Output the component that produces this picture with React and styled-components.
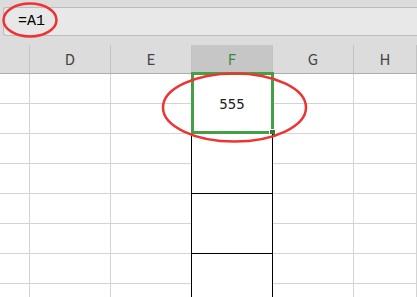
import React from "react";
import styled, { createGlobalStyle } from "styled-components";

const Global = createGlobalStyle`
  html, body { margin: 0; padding: 0; background: #ffffff; overflow: hidden; }
  body { font-family: "Noto Sans CJK SC", "Noto Sans", sans-serif; }
`;

const Page = styled.div`
  position: relative;
  width: 417px;
  height: 297px;
  overflow: hidden;
  background: #ffffff;
`;

const TopArea = styled.div`
  background: #dcdcdc;
  padding: 7px 0 9px 3px;
`;

const FormulaBox = styled.div`
  height: 27px;
  border: 1px solid #bcbcbc;
  border-right: none;
  border-radius: 3px 0 0 3px;
  background: #e8e8e8;
  display: flex;
  align-items: center;
  padding-left: 14px;
  font-family: "Liberation Mono", "DejaVu Sans Mono", monospace;
  font-size: 15px;
  color: #000;
`;

const Grid = styled.div`
  display: grid;
  grid-template-columns: 30px 81px 81px 81px 81px 1fr;
  grid-template-rows: 29px repeat(8, 30px);
`;

const HeadCell = styled.div`
  background: ${(p) => (p.$active ? "#c6c6c6" : "#dcdcdc")};
  border-right: 1px solid #c3c3c3;
  border-bottom: 1px solid #ababab;
  display: flex;
  align-items: center;
  justify-content: center;
  font-size: 15px;
  color: ${(p) => (p.$active ? "#3b8a3b" : "#454545")};
  padding-bottom: 2px;
`;

const Cell = styled.div`
  border-right: 1px solid #d4d4d4;
  border-bottom: 1px solid #d4d4d4;
  background: #fff;
`;

const MergedCell = styled.div`
  grid-column: 4;
  grid-row: span 2;
  position: relative;
  z-index: 1;
  margin-left: -1px;
  border-left: 1px solid #000;
  border-right: 1px solid #000;
  border-bottom: 1px solid #000;
  background: #fff;
  display: flex;
  align-items: center;
  justify-content: center;
  font-family: "DejaVu Sans Mono", "Liberation Mono", monospace;
  font-size: 14px;
  color: #222;
`;

const Selection = styled.div`
  position: absolute;
  top: -2px;
  left: -1px;
  right: -2px;
  bottom: -1px;
  border: 3px solid #43a047;
  pointer-events: none;
`;

const Handle = styled.div`
  position: absolute;
  right: -5px;
  bottom: -5px;
  width: 5px;
  height: 5px;
  background: #2e7d32;
  border: 1px solid #fff;
`;

const Marks = styled.svg`
  position: absolute;
  left: 0;
  top: 0;
  pointer-events: none;
  z-index: 5;
`;

const cols = ["", "D", "E", "F", "G", "H"];

export default function App() {
  const rows = [];
  for (let r = 0; r < 8; r++) {
    rows.push(<Cell key={`a${r}`} />);
    rows.push(<Cell key={`d${r}`} />);
    rows.push(<Cell key={`e${r}`} />);
    if (r % 2 === 0) {
      rows.push(
        <MergedCell key={`f${r}`}>
          {r === 0 && "555"}
          {r === 0 && (
            <Selection>
              <Handle />
            </Selection>
          )}
        </MergedCell>
      );
    }
    rows.push(<Cell key={`g${r}`} style={{ gridColumn: 5 }} />);
    rows.push(<Cell key={`h${r}`} />);
  }
  return (
    <Page>
      <Global />
      <TopArea>
        <FormulaBox>=A1</FormulaBox>
      </TopArea>
      <Grid>
        {cols.map((c) => (
          <HeadCell key={c || "corner"} $active={c === "F"}>
            {c}
          </HeadCell>
        ))}
        {rows}
      </Grid>
      <Marks width="417" height="297" viewBox="0 0 417 297">
        <ellipse cx="30" cy="20" rx="26.5" ry="16.5" fill="none" stroke="#ee3333" strokeWidth="2.5" />
        <ellipse cx="234.5" cy="107.5" rx="71.5" ry="34" fill="none" stroke="#ee3333" strokeWidth="2.5" />
      </Marks>
    </Page>
  );
}
